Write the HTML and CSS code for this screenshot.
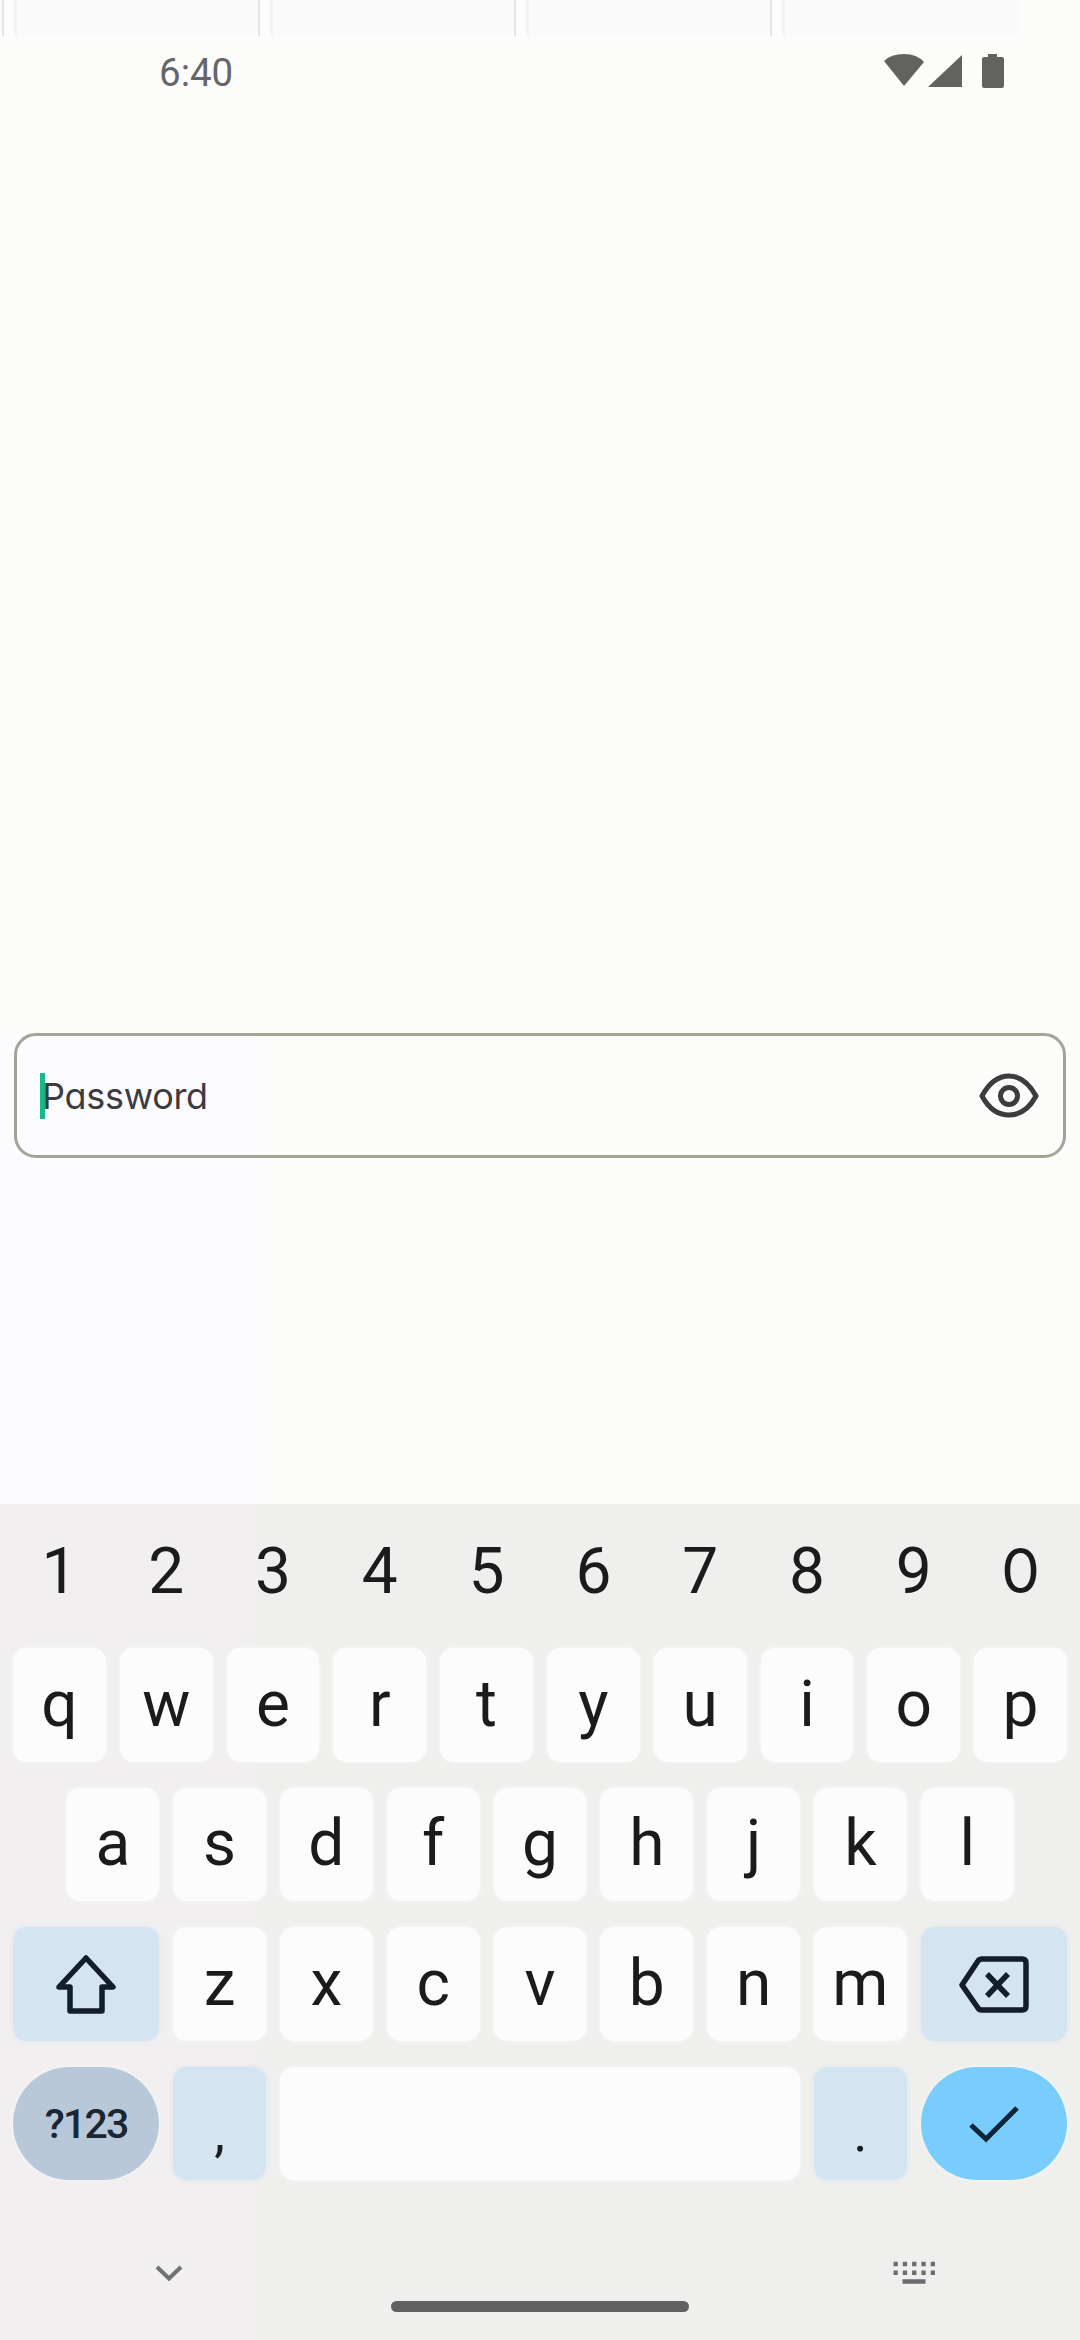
FILE: index.html
```html
<!DOCTYPE html>
<html lang="en">
<head>
<meta charset="utf-8">
<title>Password</title>
<link rel="stylesheet" href="styles.css">
</head>
<body>
<div class="screen">
  <header class="status">
    <span class="clock">6:40</span>
    <svg class="status-icons" width="122" height="40" viewBox="0 0 122 40" fill="#62625f">
      <path d="M1 11Q8 4 21 4Q34 4 41 12L21 36Z"/>
      <path d="M79 5V37H45Z"/>
      <path d="M105 4h9v3h5q2 0 2 2v27q0 2-2 2h-18q-2 0-2-2V9q0-2 2-2h4z"/>
    </svg>
  </header>

  <main class="content">
    <div class="field">
      <span class="caret"></span>
      <span class="placeholder">Password</span>
      <svg class="eye" width="62" height="48" viewBox="0 0 62 48" fill="none" stroke="#3c3c3d" stroke-width="5">
        <path d="M4 24C11 11 20 4 31 4S51 11 58 24C51 37 42 43 31 43S11 37 4 24Z" stroke-linejoin="round"/>
        <circle cx="31" cy="24" r="8.5"/>
      </svg>
    </div>
  </main>

  <section class="keyboard">
    <div class="row numbers">
      <span class="num">1</span><span class="num">2</span><span class="num">3</span><span class="num">4</span><span class="num">5</span><span class="num">6</span><span class="num">7</span><span class="num">8</span><span class="num">9</span><span class="num zero">0</span>
    </div>
    <div class="row">
      <span class="key">q</span><span class="key">w</span><span class="key">e</span><span class="key">r</span><span class="key">t</span><span class="key">y</span><span class="key">u</span><span class="key">i</span><span class="key">o</span><span class="key">p</span>
    </div>
    <div class="row inset">
      <span class="key">a</span><span class="key">s</span><span class="key">d</span><span class="key">f</span><span class="key">g</span><span class="key">h</span><span class="key">j</span><span class="key">k</span><span class="key">l</span>
    </div>
    <div class="row">
      <span class="key wide tinted">
        <svg width="64" height="62" viewBox="0 0 64 62" fill="none" stroke="#131d2b" stroke-width="5.5" stroke-linejoin="round"><path d="M32 5L59 34H48V58H16V34H5Z"/></svg>
      </span>
      <span class="key">z</span><span class="key">x</span><span class="key">c</span><span class="key">v</span><span class="key">b</span><span class="key">n</span><span class="key">m</span>
      <span class="key wide tinted">
        <svg width="72" height="58" viewBox="0 0 72 58" fill="none" stroke="#131d2b" stroke-width="5.5" stroke-linejoin="round"><path d="M4 30L20 6Q21 4 24 4H64Q68 4 68 8V51Q68 55 64 55H24Q21 55 20 53Z"/><path d="M29 19L50 41M50 19L29 41"/></svg>
      </span>
    </div>
    <div class="row">
      <span class="key wide symbols">?123</span>
      <span class="key tinted punct">,</span>
      <span class="key space"></span>
      <span class="key tinted punct">.</span>
      <span class="key wide enter">
        <svg width="50" height="40" viewBox="0 0 50 40" fill="none" stroke="#0b2638" stroke-width="5"><path d="M2 21L17 35L48 4"/></svg>
      </span>
    </div>
    <footer class="nav">
      <div class="nav-icons">
        <svg width="28" height="18" viewBox="0 0 28 18" fill="none" stroke="#727272" stroke-width="4"><path d="M2 3L14 14.500L26 3"/></svg>
        <svg width="44" height="26" viewBox="0 0 44 26" fill="none" stroke="#6c6c70" stroke-width="4.500"><path d="M1.500 4H43" stroke-dasharray="4.300 5"/><path d="M1.500 12.700H43" stroke-dasharray="4.300 5"/><path d="M10.500 21.500H33.500"/></svg>
      </div>
      <div class="handle"></div>
    </footer>
  </section>
</div>
</body>
</html>
```
FILE: styles.css
```css
* { box-sizing: border-box; }

body {
  margin: 0;
  background: #fcfcfb;
}

.screen {
  width: 1080px;
  height: 2340px;
  display: flex;
  flex-direction: column;
  overflow: hidden;
  font-family: Roboto, "Noto Sans", sans-serif;
  color: #1b1b1d;
}

svg { display: block; }

.status {
  height: 1033px;
  flex: none;
  display: flex;
  justify-content: space-between;
  align-items: flex-start;
  padding: 50px 75px 0 159px;
  background: repeating-linear-gradient(90deg, #fcfcfb 0 2px, #e6e6e4 2px 4px, #fdfdfd 4px 14px, #f3f3f2 14px 17px, #fafafa 17px 256px) 0 0 / 1020px 36px no-repeat;
}

.clock {
  font-size: 38.500px;
  line-height: 46px;
  color: #66666a;
}

.content {
  height: 471px;
  flex: none;
  padding: 0 14px;
  background: linear-gradient(90deg, #fcfbfe 0 257px, transparent 257px);
}

.field {
  height: 125px;
  display: flex;
  align-items: center;
  padding: 0 23px 0 23px;
  border: 3px solid #a3a498;
  border-radius: 22px;
}

.caret {
  width: 5px;
  height: 46px;
  background: #16b98c;
}

.placeholder {
  margin-left: -3px;
  font-family: Inter, "Noto Sans", sans-serif;
  font-feature-settings: "cv11";
  font-size: 36px;
  line-height: 44px;
  letter-spacing: -0.300px;
  color: #3c3c40;
}

.eye { margin-left: auto; }

.keyboard {
  flex: 1;
  display: flex;
  flex-direction: column;
  padding: 0 6px;
  background: linear-gradient(90deg, #f1eff0 0 257px, #efefed 257px);
}

.row {
  height: 139.5px;
  flex: none;
  display: flex;
}

.numbers {
  height: 131px;
  padding-top: 4px;
}

.inset { padding: 0 53.400px; }

.num,
.key {
  display: flex;
  align-items: center;
  justify-content: center;
  font-size: 64px;
  line-height: 1;
}

.num { width: 106.800px; }

.zero {
  font-family: Inter, sans-serif;
  font-size: 62px;
  padding-bottom: 2px;
}

.key {
  width: 92.800px;
  margin: 13px 7px;
  border-radius: 14px;
  background: #fcfcfc;
  box-shadow: 0 0 4px rgba(252, 252, 252, 0.8);
}

.wide { width: 146.200px; }

.tinted {
  background: #d5e4f1;
  box-shadow: 0 0 4px rgba(213, 228, 241, 0.8);
}

.punct {
  padding-top: 20px;
  font-size: 54px;
}

.space { width: 520px; }

.symbols {
  border-radius: 57px;
  background: #b8c8d8;
  font-size: 41px;
  font-weight: 500;
  letter-spacing: -1.800px;
  padding-top: 3px;
  color: #1a2634;
}

.enter {
  border-radius: 57px;
  padding-top: 2px;
  background: #78cdfd;
}

.nav {
  flex: 1;
  display: flex;
  flex-direction: column;
  justify-content: space-between;
  padding: 67px 0 28px;
}

.nav-icons {
  display: flex;
  align-items: center;
  justify-content: space-between;
  padding: 0 138px 0 149px;
}

.handle {
  width: 298px;
  height: 11px;
  align-self: center;
  border-radius: 6px;
  background: #616161;
}
```
